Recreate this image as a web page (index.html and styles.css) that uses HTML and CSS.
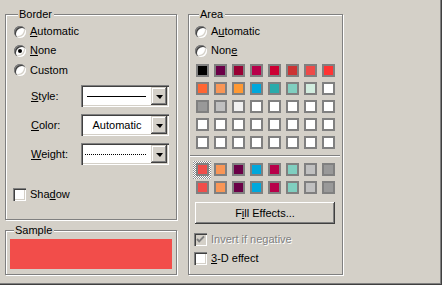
FILE: index.html
```html
<!DOCTYPE html>
<html lang="en">

<head>
    <meta charset="UTF-8">
    <meta name="viewport" content="width=device-width, initial-scale=1.0">
    <title>Format Data Series - Patterns</title>
    <link rel="stylesheet" href="styles.css">
</head>

<body>
    <div class="dialog">
        <div class="col-left">
            <div class="group group-border">
                <div class="group-title">Border</div>
                <label class="opt"><span class="radio"></span><span><u>A</u>utomatic</span></label>
                <label class="opt"><span class="radio checked"></span><span><u>N</u>one</span></label>
                <label class="opt opt-last"><span class="radio"></span><span>Custom</span></label>

                <div class="field field-first">
                    <span class="field-label"><u>S</u>tyle:</span>
                    <div class="combo">
                        <span class="combo-value"><span class="line-solid"></span></span>
                        <span class="combo-btn"><span class="arrow"></span></span>
                    </div>
                </div>
                <div class="field">
                    <span class="field-label"><u>C</u>olor:</span>
                    <div class="combo">
                        <span class="combo-value">Automatic</span>
                        <span class="combo-btn"><span class="arrow"></span></span>
                    </div>
                </div>
                <div class="field">
                    <span class="field-label"><u>W</u>eight:</span>
                    <div class="combo">
                        <span class="combo-value"><span class="line-dotted"></span></span>
                        <span class="combo-btn"><span class="arrow"></span></span>
                    </div>
                </div>

                <label class="check check-shadow"><span class="box"></span><span>Sha<u>d</u>ow</span></label>
            </div>

            <div class="group group-sample">
                <div class="group-title">Sample</div>
                <div class="sample"></div>
            </div>
        </div>

        <div class="group group-area">
            <div class="group-title">Area</div>
            <label class="opt"><span class="radio"></span><span>A<u>u</u>tomatic</span></label>
            <label class="opt"><span class="radio"></span><span>Non<u>e</u></span></label>

            <div class="palette">
                <span class="swatch" style="background:#000000"></span>
                <span class="swatch" style="background:#6b0047"></span>
                <span class="swatch" style="background:#990033"></span>
                <span class="swatch" style="background:#b8004a"></span>
                <span class="swatch" style="background:#cc0033"></span>
                <span class="swatch" style="background:#cc3333"></span>
                <span class="swatch" style="background:#ee4a48"></span>
                <span class="swatch" style="background:#ff3333"></span>

                <span class="swatch" style="background:#ff6633"></span>
                <span class="swatch" style="background:#f99656"></span>
                <span class="swatch" style="background:#ff9933"></span>
                <span class="swatch" style="background:#00a8dc"></span>
                <span class="swatch" style="background:#2aabab"></span>
                <span class="swatch" style="background:#80cfc0"></span>
                <span class="swatch" style="background:#d2eddf"></span>
                <span class="swatch"></span>

                <span class="swatch" style="background:#999999"></span>
                <span class="swatch" style="background:#c0c0c0"></span>
                <span class="swatch" style="background:#f0f0f0"></span>
                <span class="swatch"></span>
                <span class="swatch"></span>
                <span class="swatch"></span>
                <span class="swatch"></span>
                <span class="swatch"></span>

                <span class="swatch"></span>
                <span class="swatch"></span>
                <span class="swatch"></span>
                <span class="swatch"></span>
                <span class="swatch"></span>
                <span class="swatch"></span>
                <span class="swatch"></span>
                <span class="swatch"></span>

                <span class="swatch"></span>
                <span class="swatch"></span>
                <span class="swatch"></span>
                <span class="swatch"></span>
                <span class="swatch"></span>
                <span class="swatch"></span>
                <span class="swatch"></span>
                <span class="swatch"></span>
            </div>

            <div class="separator"></div>

            <div class="palette palette-recent">
                <span class="swatch selected" style="background:#f04d4a"></span>
                <span class="swatch" style="background:#f99656"></span>
                <span class="swatch" style="background:#6b0047"></span>
                <span class="swatch" style="background:#00a8dc"></span>
                <span class="swatch" style="background:#b8004a"></span>
                <span class="swatch" style="background:#80cfc0"></span>
                <span class="swatch" style="background:#c0c0c0"></span>
                <span class="swatch" style="background:#999999"></span>

                <span class="swatch" style="background:#f04d4a"></span>
                <span class="swatch" style="background:#f99656"></span>
                <span class="swatch" style="background:#6b0047"></span>
                <span class="swatch" style="background:#00a8dc"></span>
                <span class="swatch" style="background:#b8004a"></span>
                <span class="swatch" style="background:#80cfc0"></span>
                <span class="swatch" style="background:#c0c0c0"></span>
                <span class="swatch" style="background:#999999"></span>
            </div>

            <button type="button" class="button">F<u>i</u>ll Effects...</button>

            <label class="check check-invert disabled">
                <span class="box">
                    <svg width="13" height="13" viewBox="0 0 13 13">
                        <polyline points="3,6 5.2,8.4 10,3.4" fill="none" stroke="#808080" stroke-width="2"/>
                    </svg>
                </span>
                <span>Invert if negative</span>
            </label>
            <label class="check check-3d"><span class="box"></span><span><u>3</u>-D effect</span></label>
        </div>
    </div>
</body>

</html>
```

FILE: styles.css
```css
body {
    margin: 0;
    background-color: #d4d0c8;
    font-family: "Liberation Sans", Arial, sans-serif;
    font-size: 11px;
    line-height: 13px;
    color: #000000;
}

.dialog {
    display: flex;
    gap: 11px;
    width: 442px;
    height: 285px;
    box-sizing: border-box;
    padding: 14px 0 0 5px;
    box-shadow: inset -1px -1px #404040, inset -2px -2px #808080;
}

.col-left {
    display: flex;
    flex-direction: column;
    gap: 10px;
    width: 172px;
}

/* etched group box */
.group {
    display: flex;
    flex-direction: column;
    box-sizing: border-box;
    border: 1px solid #808080;
    box-shadow: inset 1px 1px #ffffff, 1px 1px #ffffff;
}

.group-title {
    align-self: flex-start;
    margin: -7px 0 0 4px;
    padding: 0 2px 0 1px;
    background-color: #d4d0c8;
    height: 13px;
}

.group-border {
    height: 206px;
    padding-left: 8px;
}

.group-sample {
    height: 45px;
    padding-left: 4px;
}

.group-area {
    width: 155px;
    height: 261px;
    padding-left: 6px;
}

/* radio buttons */
.opt {
    display: flex;
    align-items: center;
    gap: 4px;
    height: 19px;
}

.group-title + .opt {
    margin-top: 1px;
}

.opt-last {
    height: 20px;
}

.radio {
    position: relative;
    width: 12px;
    height: 12px;
    border-radius: 50%;
    background-color: #ffffff;
    box-shadow: inset 1px 1px #808080, inset 2px 2px #404040, inset -1px -1px #ffffff, inset -2px -2px #d4d0c8;
}

.radio.checked::after {
    content: "";
    position: absolute;
    left: 4px;
    top: 4px;
    width: 4px;
    height: 4px;
    border-radius: 50%;
    background-color: #000000;
}

/* combo fields */
.field {
    display: flex;
    align-items: center;
    height: 22px;
    margin-bottom: 7px;
}

.field-first {
    margin-top: 5px;
}

.field-label {
    width: 50px;
    margin-left: 17px;
}

.combo {
    display: flex;
    width: 88px;
    height: 22px;
    box-sizing: border-box;
    padding: 2px;
    background-color: #ffffff;
    box-shadow: inset 1px 1px #808080, inset 2px 2px #404040, inset -1px -1px #ffffff, inset -2px -2px #d4d0c8;
}

.combo-value {
    flex: 1;
    display: flex;
    align-items: center;
    justify-content: center;
}

.line-solid {
    width: 59px;
    height: 1px;
    margin-left: -2px;
    background-color: #000000;
}

.line-dotted {
    width: 62px;
    height: 1px;
    margin-left: -2px;
    background: repeating-linear-gradient(90deg, #000000 0 1px, transparent 1px 2px);
}

.combo-btn {
    display: flex;
    align-items: center;
    justify-content: center;
    width: 16px;
    background-color: #d4d0c8;
    box-shadow: inset -1px -1px #404040, inset 1px 1px #d4d0c8, inset -2px -2px #808080, inset 2px 2px #ffffff;
}

.arrow {
    width: 0;
    height: 0;
    border-left: 4px solid transparent;
    border-right: 3px solid transparent;
    border-top: 4px solid #000000;
    margin-top: 1px;
}

/* checkboxes */
.check {
    display: flex;
    align-items: center;
    gap: 4px;
    height: 13px;
}

.box {
    width: 13px;
    height: 13px;
    background-color: #ffffff;
    box-shadow: inset 1px 1px #808080, inset 2px 2px #404040, inset -1px -1px #ffffff, inset -2px -2px #d4d0c8;
}

.box svg {
    display: block;
}

.check-shadow {
    margin: 16px 0 0 -1px;
}

.check.disabled {
    color: #808080;
    text-shadow: 1px 1px #ffffff;
}

.check.disabled .box {
    background-color: #d4d0c8;
}

.check-invert {
    margin: 9px 0 0 -1px;
}

.check-3d {
    margin: 6px 0 0 -1px;
}

/* sample */
.sample {
    width: 162px;
    height: 30px;
    margin-top: 2px;
    background-color: #f24d4a;
}

/* colour palette */
.palette {
    display: grid;
    grid-template-columns: repeat(8, 13px);
    gap: 5px;
    margin: 4px 0 0 1px;
}

.palette-recent {
    margin-top: 7px;
}

.swatch {
    position: relative;
    width: 13px;
    height: 13px;
    box-sizing: border-box;
    border: 2px solid #808080;
    background-color: #ffffff;
}

.swatch.selected::before {
    content: "";
    position: absolute;
    left: -5px;
    top: -4px;
    width: 18px;
    height: 18px;
    z-index: -1;
    background: repeating-conic-gradient(#8c8c8c 0 25%, #ffffff 0 50%) 0 0 / 2px 2px;
}

.separator {
    width: 150px;
    height: 1px;
    margin: 6px 0 0 -5px;
    background-color: #808080;
    box-shadow: 0 1px #ffffff;
}

.button {
    width: 140px;
    height: 22px;
    margin-top: 8px;
    padding: 0;
    border: none;
    font-family: inherit;
    font-size: 11px;
    color: #000000;
    background-color: #d4d0c8;
    box-shadow: inset -1px -1px #404040, inset 1px 1px #ffffff, inset -2px -2px #808080, inset 2px 2px #d4d0c8;
}
```
